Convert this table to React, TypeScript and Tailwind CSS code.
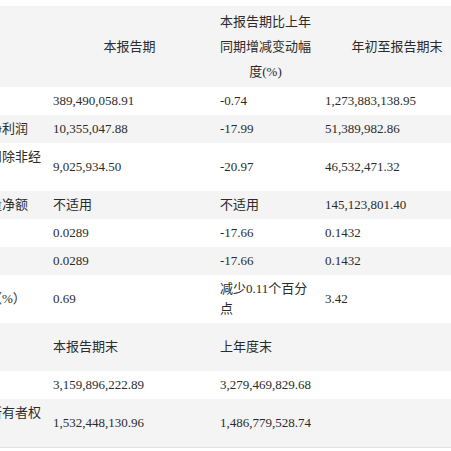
type Row = {
  label: React.ReactNode;
  cur: React.ReactNode;
  change: React.ReactNode;
  ytd?: React.ReactNode;
  tall?: boolean;
};

const rows: Row[] = [
  { label: "营业收入", cur: "389,490,058.91", change: "-0.74", ytd: "1,273,883,138.95" },
  { label: "归属于上市公司股东的净利润", cur: "10,355,047.88", change: "-17.99", ytd: "51,389,982.86" },
  {
    label: (
      <>
        归属于上市公司股东的扣除非经
        <br />
        常性损益的净利润
      </>
    ),
    cur: "9,025,934.50",
    change: "-20.97",
    ytd: "46,532,471.32",
    tall: true,
  },
  { label: "经营活动产生的现金流量净额", cur: "不适用", change: "不适用", ytd: "145,123,801.40" },
  { label: "基本每股收益（元/股）", cur: "0.0289", change: "-17.66", ytd: "0.1432" },
  { label: "稀释每股收益（元/股）", cur: "0.0289", change: "-17.66", ytd: "0.1432" },
  {
    label: "加权平均净资产收益率（%）",
    cur: "0.69",
    change: (
      <>
        减少0.11个百分
        <br />点
      </>
    ),
    ytd: "3.42",
    tall: true,
  },
];

const balanceRows: Row[] = [
  { label: "", cur: "本报告期末", change: "上年度末", tall: true },
  { label: "总资产", cur: "3,159,896,222.89", change: "3,279,469,829.68" },
  {
    label: (
      <>
        归属于上市公司股东的所有者权
        <br />益
      </>
    ),
    cur: "1,532,448,130.96",
    change: "1,486,779,528.74",
    tall: true,
  },
];

export default function App() {
  const allRows = [...rows, ...balanceRows];

  return (
    <div
      className="w-[451px] h-[451px] overflow-hidden bg-white pt-[6px] text-[13px] text-[#2b2b2b]"
      style={{ fontFamily: '"Liberation Serif", "Noto Sans CJK SC", serif' }}
    >
      <table className="ml-[-148px] w-[624px] table-fixed border-collapse">
        <colgroup>
          <col className="w-[194px]" />
          <col className="w-[167px]" />
          <col className="w-[105px]" />
          <col className="w-[158px]" />
        </colgroup>
        <thead>
          <tr className="bg-[#f4f4f4] leading-[25px]">
            <th className="pl-[7px] pr-[5px] py-[3px] font-normal text-center align-middle">项目</th>
            <th className="px-[7px] py-[3px] font-normal text-center align-middle">本报告期</th>
            <th className="px-[7px] py-[3px] font-normal text-center align-middle whitespace-nowrap">
              本报告期比上年
              <br />
              同期增减变动幅
              <br />
              度(%)
            </th>
            <th className="px-[7px] py-[3px] font-normal text-center align-middle">年初至报告期末</th>
          </tr>
        </thead>
        <tbody className="leading-[20px]">
          {allRows.map((row, i) => {
            const isLast = i === allRows.length - 1;
            const isBalanceHead = i === rows.length;
            const cell = `py-1 align-middle text-left whitespace-nowrap ${
              isLast ? "border-b border-[#e2e2e2]" : ""
            }`;
            return (
              <tr
                key={i}
                className={`${i % 2 === 1 ? "bg-[#f4f4f4]" : "bg-white"} ${row.tall ? "h-[48px]" : "h-[28px]"}`}
              >
                <td className={`pl-[7px] pr-[5px] ${cell}`}>{row.label}</td>
                <td className={`px-[7px] ${cell}`}>{row.cur}</td>
                {isBalanceHead || i > rows.length ? (
                  <td className={`px-[7px] ${cell}`} colSpan={2}>
                    {row.change}
                  </td>
                ) : (
                  <>
                    <td className={`px-[7px] ${cell}`}>{row.change}</td>
                    <td className={`px-[7px] ${cell}`}>{row.ytd}</td>
                  </>
                )}
              </tr>
            );
          })}
        </tbody>
      </table>
    </div>
  );
}
